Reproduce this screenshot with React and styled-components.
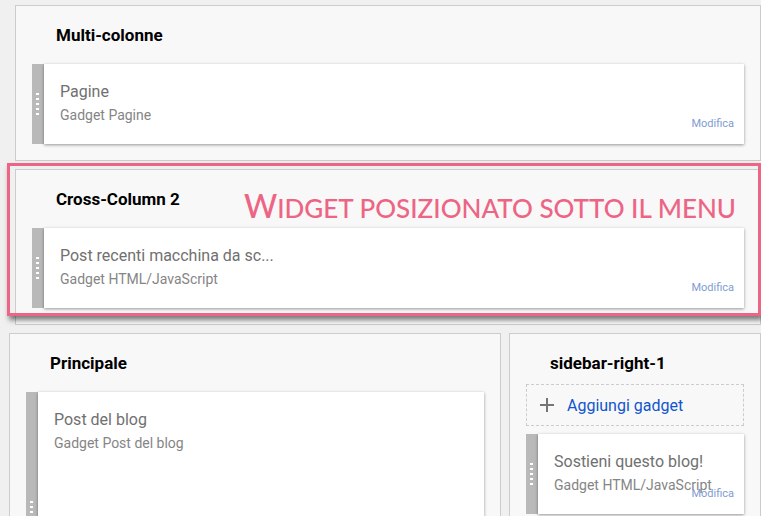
import React from 'react';
import styled, { createGlobalStyle } from 'styled-components';

const GlobalStyle = createGlobalStyle`
  * {
    box-sizing: border-box;
  }

  body {
    margin: 0;
    background: #f0f0f0;
    font-family: Roboto, 'Liberation Sans', sans-serif;
  }
`;

const Layout = styled.main`
  display: flex;
  flex-direction: column;
  gap: 8px;
  height: 100vh;
  padding: 5px 0 0 9px;
  overflow: hidden;
`;

const Columns = styled.div`
  display: grid;
  grid-template-columns: 41fr 21fr;
  align-items: start;
  gap: 8px;
`;

const Section = styled.section`
  position: relative;
  flex-shrink: 0;
  margin-left: ${props => (props.$wide ? '6px' : '0')};
  padding: 0 16px 16px;
  border: 1px solid #ccc;
  background: #f8f8f8;
`;

const SectionTitle = styled.h2`
  margin: 0;
  padding: 17px 24px 9px;
  color: #000;
  font-size: 17px;
  font-weight: 700;
  line-height: 24px;
`;

const Card = styled.article`
  display: flex;
  min-height: ${props => (props.$tall ? '240px' : '80px')};
  margin-top: 8px;
`;

const Handle = styled.div`
  display: flex;
  flex-direction: column;
  justify-content: center;
  gap: 3px;
  width: 12px;
  padding-left: 4px;
  background: #b9b9b9;
`;

const Dot = styled.span`
  width: 3px;
  height: 2px;
  background: #fff;
`;

const CardBody = styled.div`
  position: relative;
  flex: 1;
  min-width: 0;
  padding: 16px;
  background: #fff;
  box-shadow: 0 1px 3px rgba(0, 0, 0, 0.4);
`;

const CardTitle = styled.h3`
  margin: 0;
  color: #707070;
  font-size: 16px;
  font-weight: 400;
  line-height: 24px;
`;

const CardType = styled.p`
  margin: 0;
  color: #858585;
  font-size: 14px;
  font-weight: 400;
  line-height: 22px;
`;

const EditLink = styled.a`
  position: absolute;
  right: 10px;
  bottom: 12px;
  color: #7f9bd1;
  font-size: 11px;
  line-height: 16px;
  text-decoration: none;
`;

const AddButton = styled.button`
  display: flex;
  align-items: center;
  gap: 13px;
  width: 100%;
  height: 42px;
  padding: 0 13px;
  border: 1px dashed #ccc;
  background: transparent;
  color: #1155cc;
  font-family: inherit;
  font-size: 16px;
  cursor: pointer;
`;

const Highlight = styled.div`
  position: absolute;
  top: -7px;
  right: -1px;
  bottom: 8px;
  left: -9px;
  border: 3px solid #ed6584;
  box-shadow: 2px 4px 5px rgba(0, 0, 0, 0.5);
  pointer-events: none;
`;

const Note = styled.p`
  position: absolute;
  top: 16px;
  right: 24px;
  margin: 0;
  color: #ed6584;
  font-family: Lato, sans-serif;
  font-size: 26px;
  font-weight: 500;
  line-height: 40px;
  text-transform: uppercase;
  white-space: nowrap;

  &::first-letter {
    font-size: 32px;
  }
`;

function Gadget({ title, type, editable, tall }) {
  return (
    <Card $tall={tall}>
      <Handle>
        {[0, 1, 2, 3, 4].map(dot => (
          <Dot key={dot} />
        ))}
      </Handle>
      <CardBody>
        <CardTitle>{title}</CardTitle>
        <CardType>{type}</CardType>
        {editable && <EditLink href="#modifica">Modifica</EditLink>}
      </CardBody>
    </Card>
  );
}

export default function App() {
  return (
    <React.Fragment>
      <GlobalStyle />
      <Layout>
        <Section $wide>
          <SectionTitle>Multi-colonne</SectionTitle>
          <Gadget title="Pagine" type="Gadget Pagine" editable />
        </Section>
        <Section $wide>
          <SectionTitle>Cross-Column 2</SectionTitle>
          <Gadget
            title="Post recenti macchina da sc..."
            type="Gadget HTML/JavaScript"
            editable
          />
          <Highlight />
          <Note>Widget posizionato sotto il menu</Note>
        </Section>
        <Columns>
          <Section>
            <SectionTitle>Principale</SectionTitle>
            <Gadget title="Post del blog" type="Gadget Post del blog" tall />
          </Section>
          <Section>
            <SectionTitle>sidebar-right-1</SectionTitle>
            <AddButton type="button">
              <svg width="14" height="14" viewBox="0 0 14 14" aria-hidden="true">
                <path d="M7 0v14M0 7h14" stroke="#757575" strokeWidth="2" />
              </svg>
              Aggiungi gadget
            </AddButton>
            <Gadget
              title="Sostieni questo blog!"
              type="Gadget HTML/JavaScript"
              editable
            />
          </Section>
        </Columns>
      </Layout>
    </React.Fragment>
  );
}
